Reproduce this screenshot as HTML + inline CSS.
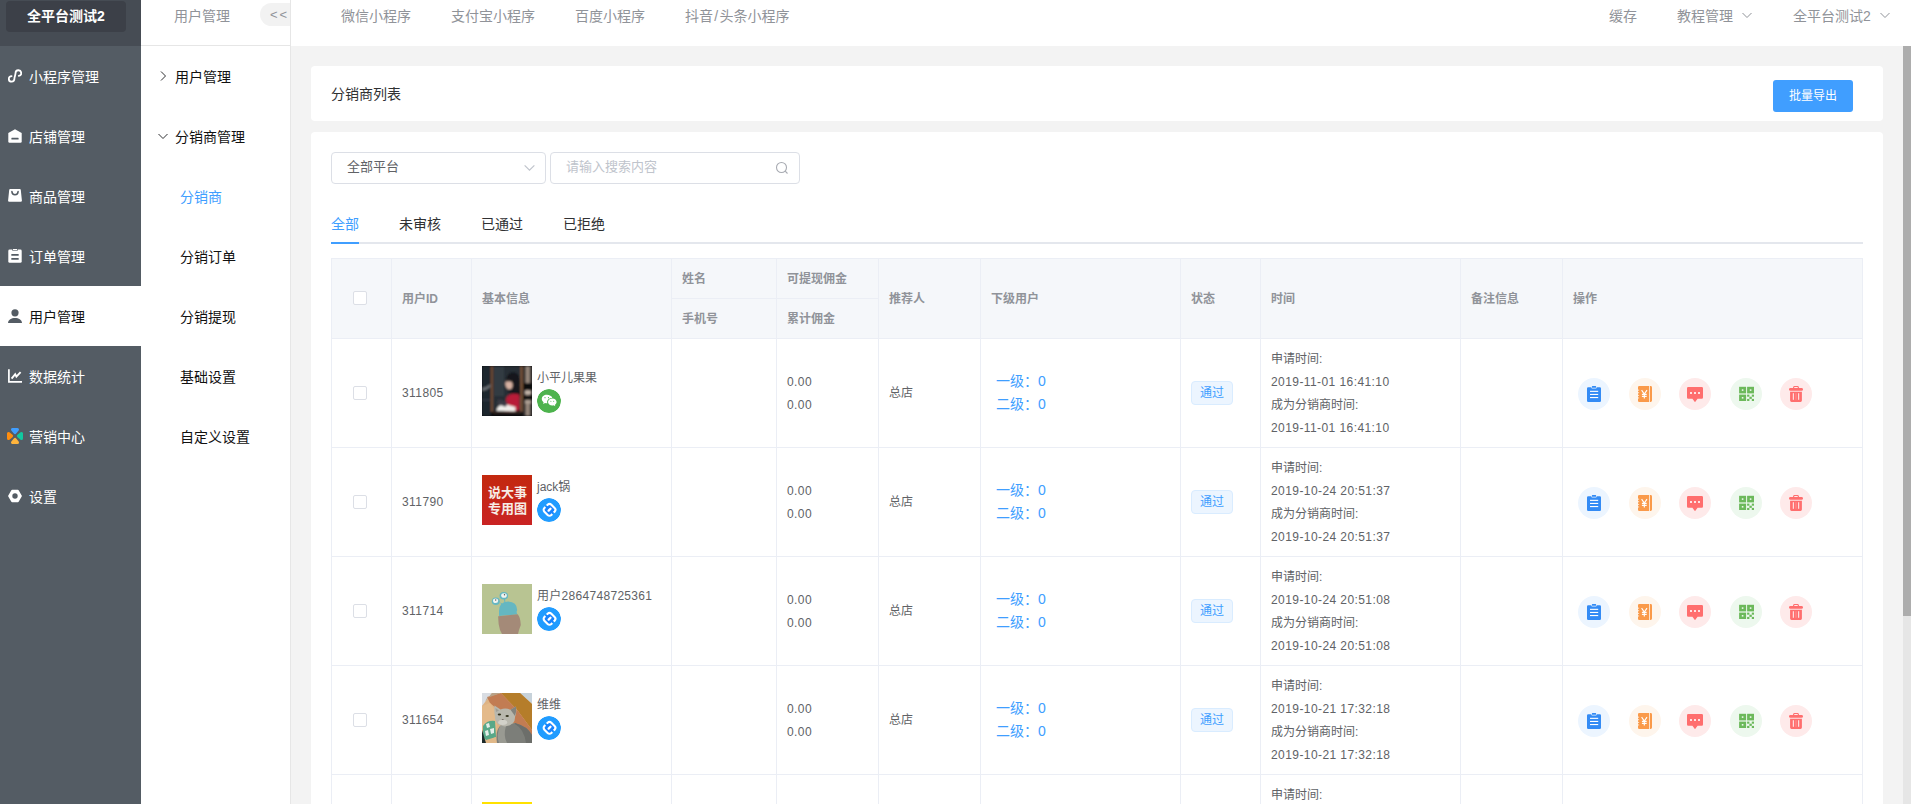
<!DOCTYPE html>
<html lang="zh-CN">
<head>
<meta charset="utf-8">
<title>分销商列表</title>
<style>
*{box-sizing:border-box;margin:0;padding:0}
html,body{width:1911px;height:804px;overflow:hidden;background:#f3f3f3}
body{font-family:"Liberation Sans","Noto Sans CJK SC",sans-serif;font-size:14px;color:#606266;position:relative}
.abs{position:absolute}
.t{position:absolute;white-space:nowrap;line-height:20px;height:20px}
/* left dark sidebar */
#side1{left:0;top:0;width:141px;height:804px;background:#545c64}
#side1 .top{left:0;top:0;width:141px;height:46px;background:#464c54}
#logo{left:6px;top:1px;width:120px;height:31px;background:#3c4048;border-radius:4px;color:#fff;font-weight:bold;font-size:14px;text-align:center;line-height:30px}
.m1{left:0;width:141px;height:60px;color:#fff;font-size:14px}
.m1 .t{left:29px;top:21px}
.m1 svg{position:absolute;left:8px;top:23px;width:14px;height:14px}
.m1.on{background:#fff;color:#111}
/* second sidebar */
#side2{left:141px;top:0;width:150px;height:804px;background:#fff;border-right:1px solid #e6e6e6}
#side2 .hd{left:0;top:0;width:149px;height:46px;border-bottom:1px solid #e6e6e6}
.m2{font-size:14px;color:#111}
/* header */
#hdr{left:291px;top:0;width:1620px;height:46px;background:#fff}
#hdr .t{color:#909399;font-size:14px;top:6px}
/* cards */
.card{background:#fff;border-radius:4px}

#c1{left:311px;top:66px;width:1572px;height:55px}
#c2{left:311px;top:132px;width:1572px;height:700px;border-radius:4px 4px 0 0}
#btn{left:1462px;top:14px;width:80px;height:32px;background:#409eff;border-radius:3px;color:#fff;font-size:12px;line-height:32px;text-align:center}
.inp{height:32px;border:1px solid #dcdfe6;border-radius:4px;background:#fff;top:20px;font-size:13px;line-height:28px;padding-left:15px}
.tab{font-size:14px;color:#303133;top:82px}
#tbl{left:20px;top:126px;width:1532px;overflow:hidden;height:600px;border-top:1px solid #ebeef5;border-left:1px solid #ebeef5}
#thead{left:0;top:0;width:1530px;height:80px;background:#f5f7fa;border-bottom:1px solid #ebeef5}
.vl{top:0;width:1px;height:600px;background:#ebeef5}
.hl{left:0;width:1530px;height:1px;background:#ebeef5}
.th{font-size:12px;font-weight:bold;color:#909399}
.td{font-size:12px;color:#606266}
.num{letter-spacing:.42px}
.cb{width:14px;height:14px;border:1px solid #dcdfe6;border-radius:2px;background:#fff;left:21px}
.row{left:0;width:1530px;height:109px}
.av{left:150px;top:27px;width:50px;height:50px;overflow:hidden}
.pf{left:205px;top:50px;width:24px;height:24px;border-radius:12px}
.lv{font-size:14px;color:#409eff;left:664px;line-height:23px;height:23px}
.tag{left:859px;top:42px;width:42px;height:24px;border:1px solid #d9ecff;background:#ecf5ff;border-radius:4px;color:#409eff;font-size:12px;line-height:23px;text-align:center}
.tm{left:939px;line-height:23px;height:23px}
.ic{top:39px;width:32px;height:32px;border-radius:16px}
.ic svg{position:absolute;left:8px;top:8px;width:16px;height:16px}
#sb{left:1903px;top:46px;width:8px;height:758px;background:#e6e6e6}
#sb i{position:absolute;left:0;top:0;width:8px;height:570px;background:#adadad}
</style>
</head>
<body>
<svg width="0" height="0" style="position:absolute"><defs>
<filter id="bl1" x="-10%" y="-10%" width="120%" height="120%"><feGaussianBlur stdDeviation="0.8"/></filter>
<filter id="bl3" x="-10%" y="-10%" width="120%" height="120%"><feGaussianBlur stdDeviation="0.55"/></filter>
<filter id="bl2" x="-10%" y="-10%" width="120%" height="120%"><feGaussianBlur stdDeviation="1.2"/></filter>
<symbol id="i1" viewBox="0 0 16 16"><path d="M2.200 1.300H5.200L5.800 2.600H10.200L10.800 1.300H13.800a1.200 1.200 0 0 1 1.200 1.200V14.800a1.200 1.200 0 0 1-1.200 1.200H2.200a1.200 1.200 0 0 1-1.200-1.200V2.500a1.200 1.200 0 0 1 1.200-1.200Z" fill="#338bf5"/><rect x="5.900" y="0" width="4.200" height="1.700" rx=".5" fill="#338bf5"/><rect x="4" y="4.800" width="8.200" height="1.100" fill="#fff"/><rect x="4" y="7.900" width="8.200" height="1.100" fill="#fff"/><rect x="4" y="11" width="8.200" height="1.100" fill="#fff"/></symbol>
<symbol id="i2" viewBox="0 0 16 16"><path d="M2.200 0H13.600a1.400 1.400 0 0 1 1.400 1.400V14.600a1.400 1.400 0 0 1-1.400 1.400H2.200a1.200 1.200 0 0 1-1.200-1.200V1.200a1.200 1.200 0 0 1 1.200-1.200Z" fill="#fa9a4a"/><rect x="12.200" y="0" width=".8" height="16" fill="#fef5ec"/><rect x=".8" y="3.700" width="1.300" height=".9" fill="#fef5ec"/><rect x=".8" y="6.300" width="1.300" height=".9" fill="#fef5ec"/><rect x=".8" y="8.900" width="1.300" height=".9" fill="#fef5ec"/><rect x=".8" y="11.500" width="1.300" height=".9" fill="#fef5ec"/><path d="M4.600 4.200L7.300 8L10 4.200M7.300 8V12.400M4.900 8.400H9.700M4.900 10.400H9.700" fill="none" stroke="#fff" stroke-width="1.150"/></symbol>
<symbol id="i3" viewBox="0 0 16 16"><path d="M1.200 1H14.800a1.200 1.200 0 0 1 1.200 1.200V11.600a1.200 1.200 0 0 1-1.200 1.200H10.600L8 16.200L5.400 12.800H1.200a1.200 1.200 0 0 1-1.200-1.200V2.200a1.200 1.200 0 0 1 1.200-1.200Z" fill="#ff6e6e"/><rect x="3.100" y="6.100" width="1.800" height="1.800" fill="#fff"/><rect x="7.100" y="6.100" width="1.800" height="1.800" fill="#fff"/><rect x="11.100" y="6.100" width="1.800" height="1.800" fill="#fff"/></symbol>
<symbol id="i4" viewBox="-0.6 0 16 16"><g fill="#6cb95b"><rect x=".5" y=".8" width="7" height="6.600"/><rect x="8.500" y=".8" width="7" height="6.600"/><rect x=".5" y="8.600" width="7" height="6.400"/><rect x="8.500" y="8.600" width="2.300" height="2.100"/><rect x="13.200" y="8.600" width="2.300" height="2.100"/><rect x="10.800" y="10.700" width="2.400" height="2.200"/><rect x="8.500" y="12.900" width="2.300" height="2.100"/><rect x="13.200" y="12.900" width="2.300" height="2.100"/></g><rect x="3.200" y="3.300" width="1.600" height="1.600" fill="#edf8ee"/><rect x="11.200" y="3.300" width="1.600" height="1.600" fill="#edf8ee"/><rect x="3.200" y="11" width="1.600" height="1.600" fill="#edf8ee"/></symbol>
<symbol id="i5" viewBox="0 0 16 16"><rect x="1" y="2" width="14" height="2.800" rx="1.400" fill="#ff6e6e"/><path d="M5.300 2.400L6.100 .5H9.900L10.700 2.400" fill="none" stroke="#ff6e6e" stroke-width="1.100"/><path d="M2.100 5.700H13.900V14.600a1.400 1.400 0 0 1-1.400 1.400H3.500a1.400 1.400 0 0 1-1.400-1.400Z" fill="#ff6e6e"/><rect x="4.800" y="7.200" width="1.100" height="6.600" fill="#feeaea"/><rect x="7.600" y="7.200" width=".8" height="6.600" fill="#ff9a9a"/><rect x="10.100" y="7.200" width="1.100" height="6.600" fill="#feeaea"/></symbol>
<symbol id="wx" viewBox="0 0 24 24"><circle cx="12" cy="12" r="12" fill="#4db34d"/><path d="M9.800 5.800c-2.800 0-5 1.900-5 4.200 0 1.300.7 2.500 1.800 3.200L6.100 15l2-1c.5.100 1.100.2 1.700.2h.5a3.900 3.900 0 0 1-.2-1.200c0-2.300 2.200-4.100 4.800-4.100h.4C14.800 7.100 12.500 5.800 9.800 5.800Z" fill="#fff"/><path d="M19.600 13c0-1.900-1.900-3.500-4.300-3.500S11 11.100 11 13s1.900 3.500 4.300 3.500c.5 0 1-.1 1.400-.2l1.600.9-.4-1.400c1-.7 1.700-1.700 1.700-2.800Z" fill="#fff"/><circle cx="8" cy="8.700" r=".6" fill="#4db34d"/><circle cx="11.500" cy="8.700" r=".6" fill="#4db34d"/><circle cx="13.900" cy="12.300" r=".5" fill="#4db34d"/><circle cx="16.700" cy="12.300" r=".5" fill="#4db34d"/></symbol>
<symbol id="ali" viewBox="0 0 24 24"><circle cx="12" cy="12" r="12" fill="#219cff"/><g transform="rotate(-45 12.500 11.800)" fill="none" stroke="#fff"><rect x="7.600" y="6.900" width="9.800" height="9.800" rx="2.600" fill="#1783ff" stroke="none"/><path d="M11.500 6.900H10.200a2.6 2.6 0 0 0-2.6 2.6V14.100a2.6 2.6 0 0 0 2.6 2.6H11.500" stroke-width="2.1"/><path d="M13.500 16.700H14.800a2.6 2.6 0 0 0 2.6-2.6V9.500a2.6 2.6 0 0 0-2.6-2.6H13.500" stroke-width="2.1"/><path d="M11.300 11.800H13.900" stroke-width="2.300" stroke-linecap="round"/></g></symbol>
</defs></svg>
<div id="side1" class="abs">
  <div class="top abs"></div>
  <div id="logo" class="abs">全平台测试2</div>
  <div class="m1 abs" style="top:46px"><svg viewBox="0 0 14 14"><path d="M3.600 7.050A2.800 2.800 0 1 0 6.400 9.850C6.400 8 7.550 6 7.550 4.100A2.850 2.850 0 1 1 10.800 6.900" fill="none" stroke="#fff" stroke-width="1.800" stroke-linecap="round"/></svg><span class="t">小程序管理</span></div>
  <div class="m1 abs" style="top:106px"><svg viewBox="0 0 14 14"><path d="M7 0.2L13.7 4V12.6a1.2 1.2 0 0 1-1.2 1.2H1.5a1.2 1.2 0 0 1-1.2-1.2V4Z" fill="#fff"/><rect x="3.4" y="8.8" width="7.2" height="1.6" rx=".5" fill="#545c64"/></svg><span class="t">店铺管理</span></div>
  <div class="m1 abs" style="top:166px"><svg viewBox="0 0 14 14"><path d="M2.200 0H11.800a1 1 0 0 1 1 .9L13.900 11.400a1.200 1.200 0 0 1-1.200 1.400H1.300A1.200 1.200 0 0 1 .1 11.400L1.200 .9a1 1 0 0 1 1-.9Z" fill="#fff"/><path d="M3.900 2.600C4 6.800 10 6.800 10.100 2.600" fill="none" stroke="#545c64" stroke-width="1.500" stroke-linecap="round"/></svg><span class="t">商品管理</span></div>
  <div class="m1 abs" style="top:226px"><svg viewBox="0 0 14 14"><rect x=".3" y=".6" width="13.4" height="13.2" rx="1.4" fill="#fff"/><rect x="4.2" y="0" width="5.6" height="1.6" fill="#545c64"/><rect x="4.9" y="0" width="4.2" height="1" fill="#fff"/><rect x="3.300" y="5" width="7.400" height="1.800" rx=".4" fill="#545c64"/><rect x="3.300" y="9" width="7.400" height="1.800" rx=".4" fill="#545c64"/></svg><span class="t">订单管理</span></div>
  <div class="m1 abs on" style="top:286px"><svg viewBox="0 0 14 14"><circle cx="7" cy="3.8" r="3.6" fill="#545c64"/><path d="M0 14.4C0 10.8 3.2 9 7 9s7 1.8 7 5.4Z" fill="#545c64"/></svg><span class="t">用户管理</span></div>
  <div class="m1 abs" style="top:346px"><svg viewBox="0 0 14 14"><path d="M.9 .2V12.9H14" fill="none" stroke="#fff" stroke-width="1.7"/><path d="M3.6 9.6L7.2 5.2L8.4 7.6L12.6 3.2" fill="none" stroke="#fff" stroke-width="1.9" stroke-linejoin="miter"/></svg><span class="t">数据统计</span></div>
  <div class="m1 abs" style="top:406px"><svg viewBox="0 0 16 16" style="left:7px;top:22px;width:16px;height:16px"><g stroke-width="3" stroke-linejoin="round"><path d="M5.500 1.500H10.500L8 4.600Z" fill="#409eff" stroke="#409eff"/><path d="M5.500 14.500H10.500L8 11.400Z" fill="#ffb43c" stroke="#ffb43c"/><path d="M1.500 5.500V10.500L4.600 8Z" fill="#ff8d0e" stroke="#ff8d0e"/><path d="M14.500 5.500V10.500L11.400 8Z" fill="#12c8a0" stroke="#12c8a0"/></g></svg><span class="t">营销中心</span></div>
  <div class="m1 abs" style="top:466px"><svg viewBox="0 0 14 14"><path d="M4.2 .8H9.800a1.200 1.200 0 0 1 1 .6L13.700 6.400a1.200 1.200 0 0 1 0 1.200L10.800 12.600a1.200 1.200 0 0 1-1 .6H4.200a1.200 1.200 0 0 1-1-.6L.3 7.600a1.200 1.200 0 0 1 0-1.200L3.200 1.400a1.200 1.200 0 0 1 1-.6Z" fill="#fff"/><circle cx="7" cy="7" r="2.700" fill="#545c64"/></svg><span class="t">设置</span></div>
</div>
<div id="side2" class="abs">
  <div class="hd abs"></div>
  <span class="t" style="left:33px;top:6px;color:#909399">用户管理</span>
  <div class="abs" style="left:119px;top:3px;width:30px;height:23px;background:#f2f2f2;border-radius:11.5px 0 0 11.5px;color:#909399;font-size:13px;line-height:24px;padding-left:10px;letter-spacing:2px;white-space:nowrap;overflow:hidden">&lt;&lt;</div>
  <svg class="abs" style="left:17px;top:70px;width:10px;height:12px" viewBox="0 0 10 12"><path d="M3 1.500L7.500 6L3 10.500" fill="none" stroke="#303133" stroke-width="1"/></svg>
  <span class="t m2" style="left:34px;top:67px">用户管理</span>
  <svg class="abs" style="left:16px;top:131px;width:12px;height:10px" viewBox="0 0 12 10"><path d="M1.500 3L6 7.500L10.500 3" fill="none" stroke="#303133" stroke-width="1"/></svg>
  <span class="t m2" style="left:34px;top:127px">分销商管理</span>
  <span class="t m2" style="left:39px;top:187px;color:#409eff">分销商</span>
  <span class="t m2" style="left:39px;top:247px">分销订单</span>
  <span class="t m2" style="left:39px;top:307px">分销提现</span>
  <span class="t m2" style="left:39px;top:367px">基础设置</span>
  <span class="t m2" style="left:39px;top:427px">自定义设置</span>
</div>
<div id="hdr" class="abs">
  <span class="t" style="left:50px">微信小程序</span>
  <span class="t" style="left:160px">支付宝小程序</span>
  <span class="t" style="left:284px">百度小程序</span>
  <span class="t" style="left:394px">抖音<span style="margin:0 1.300px">/</span>头条小程序</span>
  <span class="t" style="left:1318px">缓存</span>
  <span class="t" style="left:1386px">教程管理</span>
  <svg class="abs" style="left:1450px;top:10px;width:12px;height:10px" viewBox="0 0 12 10"><path d="M1.500 3L6 7.500L10.500 3" fill="none" stroke="#909399" stroke-width="1"/></svg>
  <span class="t" style="left:1502px">全平台测试2</span>
  <svg class="abs" style="left:1588px;top:10px;width:12px;height:10px" viewBox="0 0 12 10"><path d="M1.500 3L6 7.500L10.500 3" fill="none" stroke="#909399" stroke-width="1"/></svg>
</div>
<div id="c1" class="abs card"><span class="t" style="left:20px;top:18px;color:#303133">分销商列表</span><div id="btn" class="abs">批量导出</div></div>
<div id="c2" class="abs card">
 <div class="abs inp" style="left:20px;width:215px;color:#606266">全部平台<svg class="abs" style="left:191px;top:9px;width:13px;height:11px" viewBox="0 0 12 10"><path d="M1.500 3L6 7.500L10.500 3" fill="none" stroke="#c0c4cc" stroke-width="1.100"/></svg></div>
 <div class="abs inp" style="left:239px;width:250px;color:#c0c4cc">请输入搜索内容<svg class="abs" style="left:224px;top:8px;width:14px;height:14px" viewBox="0 0 14 14"><circle cx="6.500" cy="6.500" r="5" fill="none" stroke="#a8abb2" stroke-width="1.100"/><path d="M10.200 10.200L12.500 12.500" stroke="#a8abb2" stroke-width="1.100"/></svg></div>
 <span class="t tab" style="left:20px;color:#409eff">全部</span>
 <span class="t tab" style="left:88px;color:#303133">未审核</span>
 <span class="t tab" style="left:170px;color:#303133">已通过</span>
 <span class="t tab" style="left:252px;color:#303133">已拒绝</span>
 <div class="abs" style="left:20px;top:110px;width:1532px;height:2px;background:#e4e7ed"></div><div class="abs" style="left:20px;top:110px;width:28px;height:2px;background:#409eff"></div>
 <div id="tbl" class="abs">
  <div id="thead" class="abs"></div>
  <div class="abs vl" style="left:59px"></div>
  <div class="abs vl" style="left:139px"></div>
  <div class="abs vl" style="left:339px"></div>
  <div class="abs vl" style="left:444px"></div>
  <div class="abs vl" style="left:546px"></div>
  <div class="abs vl" style="left:648px"></div>
  <div class="abs vl" style="left:848px"></div>
  <div class="abs vl" style="left:928px"></div>
  <div class="abs vl" style="left:1128px"></div>
  <div class="abs vl" style="left:1230px"></div>
  <div class="abs vl" style="left:1530px"></div>
  <div class="abs hl" style="left:340px;width:207px;top:39px"></div>
  <div class="abs cb" style="top:32px"></div>
  <span class="t th" style="left:70px;top:30px">用户ID</span>
  <span class="t th" style="left:150px;top:30px">基本信息</span>
  <span class="t th" style="left:350px;top:10px">姓名</span>
  <span class="t th" style="left:350px;top:50px">手机号</span>
  <span class="t th" style="left:455px;top:10px">可提现佣金</span>
  <span class="t th" style="left:455px;top:50px">累计佣金</span>
  <span class="t th" style="left:557px;top:30px">推荐人</span>
  <span class="t th" style="left:659px;top:30px">下级用户</span>
  <span class="t th" style="left:859px;top:30px">状态</span>
  <span class="t th" style="left:939px;top:30px">时间</span>
  <span class="t th" style="left:1139px;top:30px">备注信息</span>
  <span class="t th" style="left:1241px;top:30px">操作</span>
  <div class="abs row" style="top:80px">
   <div class="abs hl" style="top:108px"></div><div class="abs cb" style="top:47px"></div>
   <span class="t td num" style="left:70px;top:44px">311805</span>
   <div class="abs av" id="a1"><svg viewBox="0 0 50 50" width="50" height="50"><rect width="50" height="50" fill="#0b0c0e"/><g filter="url(#bl1)"><rect x="0" y="0" width="9" height="50" fill="#1f262e"/><rect x="11" y="0" width="28" height="45" fill="#262d35"/><rect x="12" y="0" width="10" height="30" fill="#313a42"/><rect x="41.500" y="0" width="8.500" height="50" fill="#4a4340"/><rect x="44" y="0" width="3.500" height="50" fill="#9a8a7e"/><rect x="9" y="0" width="1.800" height="46" fill="#7a5238"/><rect x="38.700" y="0" width="1.800" height="46" fill="#94633f"/><rect x="41" y="17" width="9" height="7" fill="#0b0c0e"/><rect x="41" y="29.500" width="9" height="4.500" fill="#0b0c0e"/><rect x="43" y="25" width="6" height="3" fill="#c4b6aa"/><rect x="43" y="34.500" width="6" height="3" fill="#b0a296"/><path d="M0 22Q5 21 8.500 18V21Q5 24 0 25Z" fill="#6a7075"/><rect x="0" y="33" width="8" height="2" fill="#2e353c"/><path d="M24 14Q26 5 33 6.500Q39 9 38 20L38.500 31L33 28L27 27Z" fill="#14161a"/><ellipse cx="27" cy="18.500" rx="3.600" ry="5" fill="#d8b2a3" transform="rotate(-12 27 18.500)"/><path d="M24.500 14.500Q28 11 32 13L31 17Q28 14 24.500 16Z" fill="#1a1b1f"/><path d="M22.500 45.500L24.500 31Q29 26 37.500 28.500V44L30 46Z" fill="#b81d38"/><path d="M14.500 45Q15 38.500 23 38L33.500 41V46Z" fill="#f1efeb"/><rect x="15.500" y="34.500" width="9.500" height="5" fill="#3b3b44" transform="rotate(20 20 37)"/><rect x="11" y="45.500" width="28" height="2" fill="#3f2c22"/></g></svg></div><span class="t td" style="left:205px;top:29px">小平儿果果</span><svg class="abs pf" viewBox="0 0 24 24"><use href="#wx"/></svg>
   <span class="t td num" style="left:455px;top:33px">0.00</span><span class="t td num" style="left:455px;top:56px">0.00</span>
   <span class="t td" style="left:557px;top:44px">总店</span>
   <span class="t lv" style="top:31px">一级：0</span><span class="t lv" style="top:54px">二级：0</span>
   <div class="abs tag">通过</div>
   <span class="t td tm" style="top:9px">申请时间:</span><span class="t td tm num" style="top:32px">2019-11-01 16:41:10</span><span class="t td tm" style="top:55px">成为分销商时间:</span><span class="t td tm num" style="top:78px">2019-11-01 16:41:10</span>
   <div class="abs ic" style="left:1246px;background:#ecf5ff"><svg viewBox="0 0 16 16"><use href="#i1"/></svg></div>
   <div class="abs ic" style="left:1297px;background:#fef5ec"><svg viewBox="0 0 16 16"><use href="#i2"/></svg></div>
   <div class="abs ic" style="left:1347px;background:#feeaea"><svg viewBox="0 0 16 16"><use href="#i3"/></svg></div>
   <div class="abs ic" style="left:1398px;background:#edf8ee"><svg viewBox="0 0 16 16"><use href="#i4"/></svg></div>
   <div class="abs ic" style="left:1448px;background:#feeaea"><svg viewBox="0 0 16 16"><use href="#i5"/></svg></div>
  </div>
  <div class="abs row" style="top:189px">
   <div class="abs hl" style="top:108px"></div><div class="abs cb" style="top:47px"></div>
   <span class="t td num" style="left:70px;top:44px">311790</span>
   <div class="abs av" id="a2"><svg viewBox="0 0 50 50" width="50" height="50"><defs><linearGradient id="rg" x1="0" y1="0" x2="0" y2="1"><stop offset="0" stop-color="#c3290f"/><stop offset="1" stop-color="#c92323"/></linearGradient></defs><rect width="50" height="50" fill="url(#rg)"/><text x="25.500" y="21.500" text-anchor="middle" font-family="'Liberation Sans','Noto Sans CJK SC',sans-serif" font-weight="bold" font-size="13" fill="#f6ece6">说大事</text><text x="25.500" y="37.800" text-anchor="middle" font-family="'Liberation Sans','Noto Sans CJK SC',sans-serif" font-weight="bold" font-size="13" fill="#f6ece6">专用图</text></svg></div><span class="t td" style="left:205px;top:29px">jack锅</span><svg class="abs pf" viewBox="0 0 24 24"><use href="#ali"/></svg>
   <span class="t td num" style="left:455px;top:33px">0.00</span><span class="t td num" style="left:455px;top:56px">0.00</span>
   <span class="t td" style="left:557px;top:44px">总店</span>
   <span class="t lv" style="top:31px">一级：0</span><span class="t lv" style="top:54px">二级：0</span>
   <div class="abs tag">通过</div>
   <span class="t td tm" style="top:9px">申请时间:</span><span class="t td tm num" style="top:32px">2019-10-24 20:51:37</span><span class="t td tm" style="top:55px">成为分销商时间:</span><span class="t td tm num" style="top:78px">2019-10-24 20:51:37</span>
   <div class="abs ic" style="left:1246px;background:#ecf5ff"><svg viewBox="0 0 16 16"><use href="#i1"/></svg></div>
   <div class="abs ic" style="left:1297px;background:#fef5ec"><svg viewBox="0 0 16 16"><use href="#i2"/></svg></div>
   <div class="abs ic" style="left:1347px;background:#feeaea"><svg viewBox="0 0 16 16"><use href="#i3"/></svg></div>
   <div class="abs ic" style="left:1398px;background:#edf8ee"><svg viewBox="0 0 16 16"><use href="#i4"/></svg></div>
   <div class="abs ic" style="left:1448px;background:#feeaea"><svg viewBox="0 0 16 16"><use href="#i5"/></svg></div>
  </div>
  <div class="abs row" style="top:298px">
   <div class="abs hl" style="top:108px"></div><div class="abs cb" style="top:47px"></div>
   <span class="t td num" style="left:70px;top:44px">311714</span>
   <div class="abs av" id="a3"><svg viewBox="0 0 50 50" width="50" height="50"><rect width="50" height="50" fill="#b8c492"/><path d="M21 21L18.500 19M23 19L22.500 15" stroke="#65b7c2" stroke-width="1"/><ellipse cx="21.800" cy="11.800" rx="4.300" ry="3.800" fill="#65b7c2"/><ellipse cx="13.800" cy="17.200" rx="4" ry="3.800" fill="#65b7c2"/><ellipse cx="22" cy="11.500" rx="2.800" ry="2.300" fill="#f2f4f0"/><ellipse cx="13.600" cy="16.800" rx="2.600" ry="2.300" fill="#f2f4f0"/><circle cx="22.500" cy="10.800" r=".7" fill="#555"/><circle cx="13.700" cy="16" r=".7" fill="#555"/><path d="M17 32V27Q17 18 26 17.600Q35 18 35.200 26L34.500 28L35.400 30.500Z" fill="#65b7c2"/><path d="M16.200 32.200L35.600 30.200Q38.500 33 38.800 41L37 46L36 50H20L18 46Q16 40 16.200 32.200Z" fill="#a48a78"/></svg></div><span class="t td" style="left:205px;top:29px;letter-spacing:.3px">用户2864748725361</span><svg class="abs pf" viewBox="0 0 24 24"><use href="#ali"/></svg>
   <span class="t td num" style="left:455px;top:33px">0.00</span><span class="t td num" style="left:455px;top:56px">0.00</span>
   <span class="t td" style="left:557px;top:44px">总店</span>
   <span class="t lv" style="top:31px">一级：0</span><span class="t lv" style="top:54px">二级：0</span>
   <div class="abs tag">通过</div>
   <span class="t td tm" style="top:9px">申请时间:</span><span class="t td tm num" style="top:32px">2019-10-24 20:51:08</span><span class="t td tm" style="top:55px">成为分销商时间:</span><span class="t td tm num" style="top:78px">2019-10-24 20:51:08</span>
   <div class="abs ic" style="left:1246px;background:#ecf5ff"><svg viewBox="0 0 16 16"><use href="#i1"/></svg></div>
   <div class="abs ic" style="left:1297px;background:#fef5ec"><svg viewBox="0 0 16 16"><use href="#i2"/></svg></div>
   <div class="abs ic" style="left:1347px;background:#feeaea"><svg viewBox="0 0 16 16"><use href="#i3"/></svg></div>
   <div class="abs ic" style="left:1398px;background:#edf8ee"><svg viewBox="0 0 16 16"><use href="#i4"/></svg></div>
   <div class="abs ic" style="left:1448px;background:#feeaea"><svg viewBox="0 0 16 16"><use href="#i5"/></svg></div>
  </div>
  <div class="abs row" style="top:407px">
   <div class="abs hl" style="top:108px"></div><div class="abs cb" style="top:47px"></div>
   <span class="t td num" style="left:70px;top:44px">311654</span>
   <div class="abs av" id="a4"><svg viewBox="0 0 50 50" width="50" height="50"><rect width="50" height="50" fill="#deb384"/><g filter="url(#bl3)"><path d="M0 0H10L0 13Z" fill="#d9dde3"/><path d="M38 0H50V11Z" fill="#c7d2da"/><path d="M19 0H38L50 11V37L36 18Z" fill="#b57d2a"/><path d="M5 4L19 0L36 18L50 37V46L34 32L8 10Z" fill="#c27c52"/><path d="M10 0H19L5 5L3 9Z" fill="#b8a288"/><path d="M0 13L8 10L16 22L13 50H0Z" fill="#e4ba8a"/><path d="M1 33Q5 27 13 28L14 44L5 48L1 44Z" fill="#58a888"/><path d="M4 31L7 30L8 34L5 35ZM8 36L12 35L12 40L9 41ZM3 38L6 37L7 42L4 43Z" fill="#e4eee8"/><path d="M0 37L4 50H0Z" fill="#1e2b2b"/><path d="M4 47L14 44L20 50H4Z" fill="#e0b888"/><path d="M15 50Q13 37 19 32L33 30Q45 33 50 42V50Z" fill="#7c7e79"/><path d="M33 31Q42 36 44 50H50V42Q45 33 33 30Z" fill="#6c6e6a"/><path d="M24 33Q21 43 25 50H17Q14 42 18 33Z" fill="#999a92"/><path d="M12.500 12.500L18.500 16.500Q23.500 14.500 28.500 16.800L34 13.500Q35 20 33 24Q33.500 32 23 33.500Q12.500 32.500 13 24Q11.800 18 12.500 12.500Z" fill="#b9b8ae"/><path d="M28.500 16.800L34 13.500Q34.500 19 33 23Z" fill="#83837d"/><path d="M13.500 15L17 17.500L14 19Z" fill="#a09f97"/><ellipse cx="17.400" cy="21.600" rx="1.700" ry="1" fill="#34331f"/><ellipse cx="25.200" cy="23" rx="1.700" ry="1" fill="#34331f"/><path d="M19.600 26L21.800 26.300L20.600 28Z" fill="#5a4a48"/><ellipse cx="20.700" cy="29.300" rx="4.500" ry="2.600" fill="#d2d1c9"/></g></svg></div><span class="t td" style="left:205px;top:29px">维维</span><svg class="abs pf" viewBox="0 0 24 24"><use href="#ali"/></svg>
   <span class="t td num" style="left:455px;top:33px">0.00</span><span class="t td num" style="left:455px;top:56px">0.00</span>
   <span class="t td" style="left:557px;top:44px">总店</span>
   <span class="t lv" style="top:31px">一级：0</span><span class="t lv" style="top:54px">二级：0</span>
   <div class="abs tag">通过</div>
   <span class="t td tm" style="top:9px">申请时间:</span><span class="t td tm num" style="top:32px">2019-10-21 17:32:18</span><span class="t td tm" style="top:55px">成为分销商时间:</span><span class="t td tm num" style="top:78px">2019-10-21 17:32:18</span>
   <div class="abs ic" style="left:1246px;background:#ecf5ff"><svg viewBox="0 0 16 16"><use href="#i1"/></svg></div>
   <div class="abs ic" style="left:1297px;background:#fef5ec"><svg viewBox="0 0 16 16"><use href="#i2"/></svg></div>
   <div class="abs ic" style="left:1347px;background:#feeaea"><svg viewBox="0 0 16 16"><use href="#i3"/></svg></div>
   <div class="abs ic" style="left:1398px;background:#edf8ee"><svg viewBox="0 0 16 16"><use href="#i4"/></svg></div>
   <div class="abs ic" style="left:1448px;background:#feeaea"><svg viewBox="0 0 16 16"><use href="#i5"/></svg></div>
  </div>
  <div class="abs row" style="top:516px">
   <div class="abs hl" style="top:108px"></div><div class="abs cb" style="top:47px"></div>
   <span class="t td num" style="left:70px;top:44px">311600</span>
   <div class="abs av" id="a5"><svg viewBox="0 0 50 50" width="50" height="50"><rect width="50" height="50" fill="#ffe100"/></svg></div><span class="t td" style="left:205px;top:29px"></span><svg class="abs pf" viewBox="0 0 24 24"><use href="#ali"/></svg>
   <span class="t td num" style="left:455px;top:33px">0.00</span><span class="t td num" style="left:455px;top:56px">0.00</span>
   <span class="t td" style="left:557px;top:44px">总店</span>
   <span class="t lv" style="top:31px">一级：0</span><span class="t lv" style="top:54px">二级：0</span>
   <div class="abs tag">通过</div>
   <span class="t td tm" style="top:9px">申请时间:</span><span class="t td tm num" style="top:32px">2019-10-20 10:00:00</span><span class="t td tm" style="top:55px">成为分销商时间:</span><span class="t td tm num" style="top:78px">2019-10-20 10:00:00</span>
   <div class="abs ic" style="left:1246px;background:#ecf5ff"><svg viewBox="0 0 16 16"><use href="#i1"/></svg></div>
   <div class="abs ic" style="left:1297px;background:#fef5ec"><svg viewBox="0 0 16 16"><use href="#i2"/></svg></div>
   <div class="abs ic" style="left:1347px;background:#feeaea"><svg viewBox="0 0 16 16"><use href="#i3"/></svg></div>
   <div class="abs ic" style="left:1398px;background:#edf8ee"><svg viewBox="0 0 16 16"><use href="#i4"/></svg></div>
   <div class="abs ic" style="left:1448px;background:#feeaea"><svg viewBox="0 0 16 16"><use href="#i5"/></svg></div>
  </div>
 </div>
</div>
<div id="sb" class="abs"><i></i></div>

</body>
</html>
